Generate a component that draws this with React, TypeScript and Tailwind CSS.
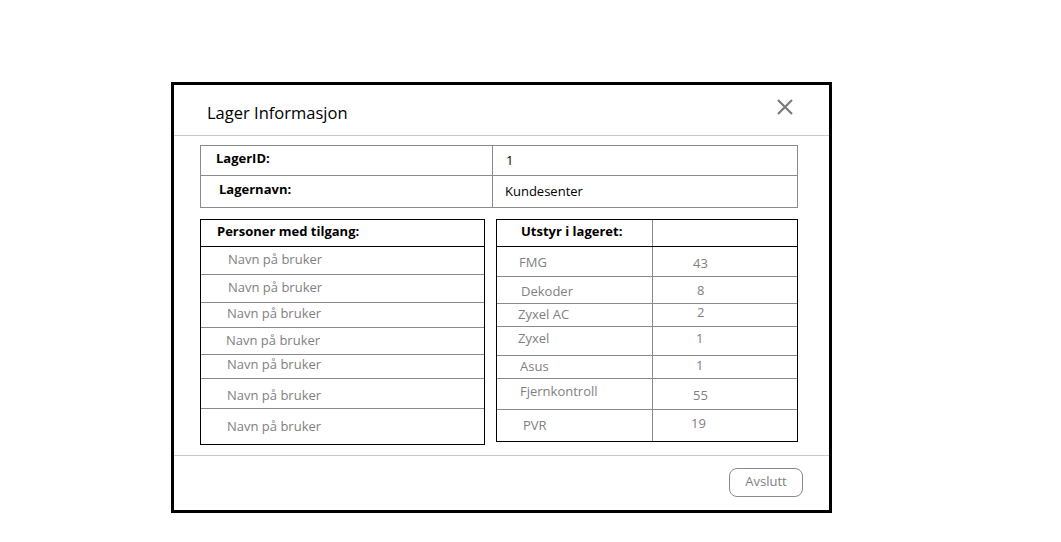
import React from "react";

const brukere = [
  { pad: "pl-[27px] pb-[2px]", h: "h-[28px]" },
  { pad: "pl-[27px] pb-[2px]", h: "h-[28px]" },
  { pad: "pl-[26px] pb-[2px]", h: "h-[25px]" },
  { pad: "pl-[25px]", h: "h-[27px]" },
  { pad: "pl-[26px] pb-[3px]", h: "h-[24px]" },
  { pad: "pl-[26px] pt-[4px]", h: "h-[30px]" },
  { pad: "pl-[26px]", h: "h-[35px]" },
];

const utstyr = [
  { navn: "FMG", antall: "43", h: "h-[30px]", np: "pl-[22px] pt-[2px]", ap: "pl-[40px] pt-[4px]" },
  { navn: "Dekoder", antall: "8", h: "h-[27px]", np: "pl-[24px] pt-[4px]", ap: "pl-[44px] pt-[2px]" },
  { navn: "Zyxel AC", antall: "2", h: "h-[23px]", np: "pl-[21px]", ap: "pl-[44px] pb-[4px]" },
  { navn: "Zyxel", antall: "1", h: "h-[29px]", np: "pl-[21px] pb-[4px]", ap: "pl-[43px] pb-[4px]" },
  { navn: "Asus", antall: "1", h: "h-[23px]", np: "pl-[23px]", ap: "pl-[43px] pb-[2px]" },
  { navn: "Fjernkontroll", antall: "55", h: "h-[31px]", np: "pl-[23px] pb-[4px]", ap: "pl-[40px] pt-[4px]" },
  { navn: "PVR", antall: "19", h: "h-[31px]", np: "pl-[26px]", ap: "pl-[38px] pb-[4px]" },
];

export default function App() {
  return (
    <div
      className="min-h-screen bg-white pt-[82px] pl-[171px] text-black"
      style={{ fontFamily: '"Open Sans", "Noto Sans", sans-serif' }}
    >
      <div className="w-[661px] h-[431px] border-[3px] border-black flex flex-col bg-white">
        {/* topp */}
        <div className="h-[51px] shrink-0 border-b border-[#c8c8c8] flex items-center justify-between pl-[33px] pr-[36px]">
          <span className="text-[16.5px] pt-[6px]">Lager Informasjon</span>
          <button className="pb-[6px] text-[#7a7a7a]">
            <svg width="16" height="16" viewBox="0 0 16 16" fill="none" stroke="currentColor" strokeWidth="2.2">
              <path d="M1 1 L15 15 M15 1 L1 15" />
            </svg>
          </button>
        </div>

        {/* innhold */}
        <div className="flex-1 pt-[9px] pl-[26px] text-[13px]">
          <div className="w-[598px] border border-[#8a8a8a]">
            <div className="flex h-[29px]">
              <div className="w-[292px] border-r border-[#8a8a8a] flex items-center pl-[15px] pb-[3px] font-bold">
                LagerID:
              </div>
              <div className="flex items-center pl-[13px]">1</div>
            </div>
            <div className="flex h-[32px] border-t border-[#8a8a8a]">
              <div className="w-[292px] border-r border-[#8a8a8a] flex items-center pl-[18px] pb-[3px] font-bold">
                Lagernavn:
              </div>
              <div className="flex items-center pl-[12px]">Kundesenter</div>
            </div>
          </div>

          <div className="flex gap-[11px] mt-[11px]">
            {/* personer */}
            <div className="w-[285px] border border-black">
              <div className="h-[27px] border-b border-black flex items-center pl-[16px] pb-[3px] font-bold">
                Personer med tilgang:
              </div>
              {brukere.map((b, i) => (
                <div
                  key={i}
                  className={`${b.h} flex items-center text-[#7f7f7f] ${
                    i < brukere.length - 1 ? "border-b border-[#8a8a8a]" : ""
                  } ${b.pad}`}
                >
                  Navn på bruker
                </div>
              ))}
            </div>

            {/* utstyr */}
            <div className="w-[302px] self-start border border-black">
              <div className="h-[27px] border-b border-black flex">
                <div className="w-[156px] border-r border-[#8a8a8a] flex items-center pl-[24px] pb-[3px] font-bold">
                  Utstyr i lageret:
                </div>
                <div className="flex-1" />
              </div>
              {utstyr.map((u, i) => (
                <div
                  key={u.navn}
                  className={`${u.h} flex text-[#7f7f7f] ${
                    i < utstyr.length - 1 ? "border-b border-[#8a8a8a]" : ""
                  }`}
                >
                  <div className={`w-[156px] border-r border-[#8a8a8a] flex items-center ${u.np}`}>
                    {u.navn}
                  </div>
                  <div className={`flex-1 flex items-center ${u.ap}`}>{u.antall}</div>
                </div>
              ))}
            </div>
          </div>
        </div>

        {/* bunn */}
        <div className="h-[55px] shrink-0 border-t border-[#c8c8c8] flex justify-end items-start pt-[12px] pr-[26px]">
          <button className="w-[74px] h-[29px] rounded-[8px] border border-[#8a8a8a] text-[13px] text-[#7f7f7f] pb-[2px]">
            Avslutt
          </button>
        </div>
      </div>
    </div>
  );
}
